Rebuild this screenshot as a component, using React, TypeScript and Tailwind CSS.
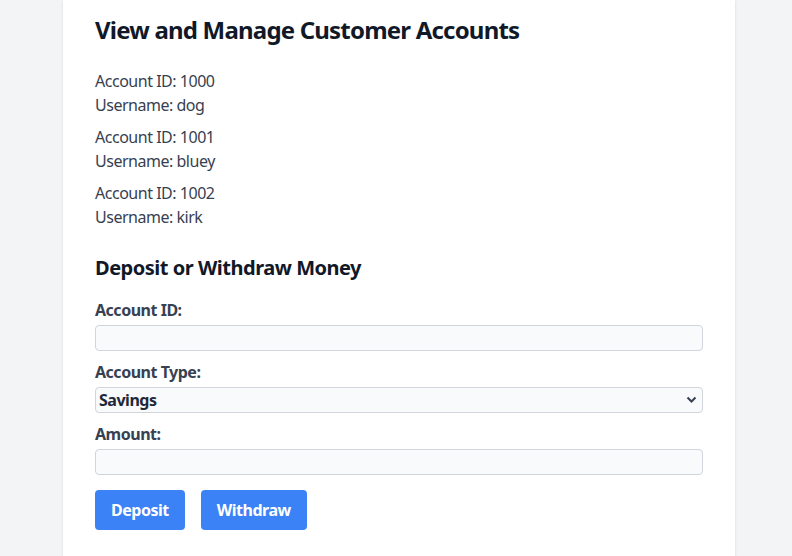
import { useState } from 'react'

const accounts = [
  { id: 1000, username: 'dog' },
  { id: 1001, username: 'bluey' },
  { id: 1002, username: 'kirk' },
]

export default function App() {
  const [accountId, setAccountId] = useState('')
  const [type, setType] = useState('Savings')
  const [amount, setAmount] = useState('')

  return (
    <div className="min-h-[556px] bg-[#f3f4f6] font-['Noto_Sans',sans-serif] tracking-[-0.03em]">
      <div className="ml-[63px] w-[672px] min-h-[556px] bg-white px-8 pt-[14px] pb-6 shadow-sm">
        <h1 className="text-2xl font-bold tracking-[-0.8px] text-[#111827] mb-[23px]">View and Manage Customer Accounts</h1>

        <div className="mb-[25px]">
          {accounts.map(a => (
            <div key={a.id} className="mb-2 last:mb-0 text-base text-[#374151]">
              <p>Account ID: {a.id}</p>
              <p>Username: {a.username}</p>
            </div>
          ))}
        </div>

        <h2 className="text-xl font-bold text-[#111827] mb-4">Deposit or Withdraw Money</h2>

        <form onSubmit={e => e.preventDefault()}>
          <label className="block font-bold text-[#374151] mb-[3px]">Account ID:</label>
          <input value={accountId} onChange={e => setAccountId(e.target.value)}
            className="block w-full h-[26px] rounded border border-[#d1d5db] bg-[#f9fafb] px-1 mb-[9px]" />

          <label className="block font-bold text-[#374151] mb-[3px]">Account Type:</label>
          <div className="relative mb-[9px]">
            <select value={type} onChange={e => setType(e.target.value)}
              className="block w-full h-[26px] appearance-none rounded border border-[#d1d5db] bg-[#f9fafb] pl-[3px] font-bold text-[#1f2937]">
              <option>Savings</option>
              <option>Checking</option>
            </select>
            <svg className="absolute right-[6px] top-[9px] pointer-events-none" width="11" height="8" viewBox="0 0 11 8">
              <path d="M1.5 1.5 L5.5 5.5 L9.5 1.5" fill="none" stroke="#374151" strokeWidth="2" />
            </svg>
          </div>

          <label className="block font-bold text-[#374151] mb-[3px]">Amount:</label>
          <input value={amount} onChange={e => setAmount(e.target.value)}
            className="block w-full h-[26px] rounded border border-[#d1d5db] bg-[#f9fafb] px-1" />

          <div className="flex gap-4 mt-[15px]">
            <button className="h-10 px-4 rounded bg-[#3b82f6] text-white font-bold">Deposit</button>
            <button className="h-10 px-4 rounded bg-[#3b82f6] text-white font-bold">Withdraw</button>
          </div>
        </form>
      </div>
    </div>
  )
}
